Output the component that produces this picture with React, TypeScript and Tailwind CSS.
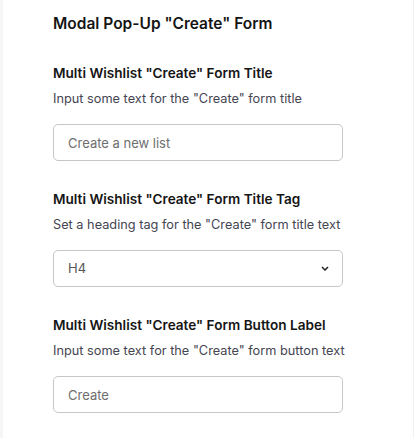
import { useState } from "react";

type Field = {
  label: string;
  help: string;
  kind: "input" | "select";
  placeholder?: string;
};

const fields: Field[] = [
  {
    label: 'Multi Wishlist "Create" Form Title',
    help: 'Input some text for the "Create" form title',
    kind: "input",
    placeholder: "Create a new list",
  },
  {
    label: 'Multi Wishlist "Create" Form Title Tag',
    help: 'Set a heading tag for the "Create" form title text',
    kind: "select",
  },
  {
    label: 'Multi Wishlist "Create" Form Button Label',
    help: 'Input some text for the "Create" form button text',
    kind: "input",
    placeholder: "Create",
  },
];

function Chevron() {
  return (
    <svg width="8" height="5" viewBox="0 0 8 5" fill="none" className="text-[#222]">
      <path d="M1 1l3 3 3-3" stroke="currentColor" strokeWidth="1.5" />
    </svg>
  );
}

function FieldRow({ field }: { field: Field }) {
  const [tag, setTag] = useState("H4");

  return (
    <div className="flex flex-col">
      <p className="text-[13.6px] leading-5 font-semibold text-[#151515]">{field.label}</p>
      <p className="mt-1.5 text-[12.75px] leading-5 text-[#454552]">{field.help}</p>
      {field.kind === "input" ? (
        <input
          className="mt-[15px] h-[37px] w-[290px] rounded-[5px] border border-[#c6c6c6] bg-white px-[14px] text-[13px] text-[#333] outline-none placeholder:text-[#6e6e6e]"
          placeholder={field.placeholder}
        />
      ) : (
        <div className="relative mt-[15px] h-[37px] w-[290px]">
          <select
            value={tag}
            onChange={(e) => setTag(e.target.value)}
            className="h-full w-full appearance-none rounded-[5px] border border-[#c6c6c6] bg-white px-[14px] text-[13px] text-[#555] outline-none"
          >
            {["H1", "H2", "H3", "H4", "H5", "H6"].map((h) => (
              <option key={h}>{h}</option>
            ))}
          </select>
          <span className="pointer-events-none absolute top-[16px] right-[14px] flex">
            <Chevron />
          </span>
        </div>
      )}
    </div>
  );
}

export default function App() {
  return (
    <div className="flex h-[438px] w-[414px] bg-white font-['Inter',sans-serif]">
      <div className="w-[3px] bg-[#f5f6f8]" />
      <div className="flex flex-1 flex-col pt-3 pl-[50px]">
        <h2 className="text-[15.5px] leading-6 font-semibold text-[#141414]">
          Modal Pop-Up "Create" Form
        </h2>
        <div className="mt-[27px] flex flex-col gap-[28px]">
          {fields.map((f) => (
            <FieldRow key={f.label} field={f} />
          ))}
        </div>
      </div>
      <div className="w-px bg-[#f0f0f2]" />
    </div>
  );
}
